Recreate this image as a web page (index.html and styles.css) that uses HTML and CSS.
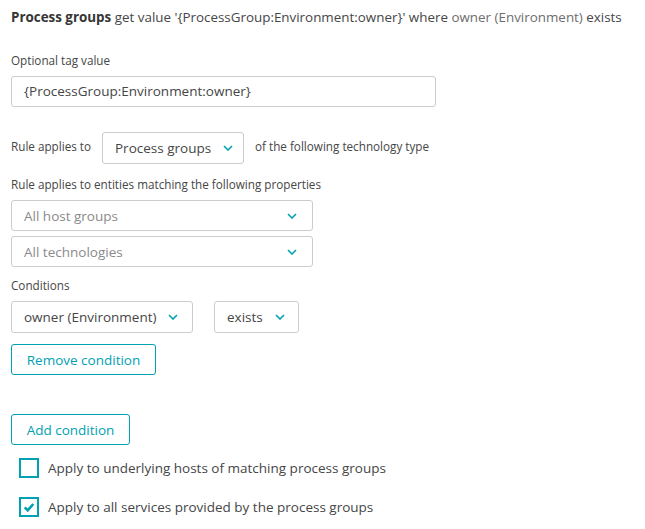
FILE: index.html
```html
<!DOCTYPE html>
<html>
<head>
<meta charset="utf-8">
<link rel="stylesheet" href="styles.css">
</head>
<body>
<div class="page">
  <div class="title"><b>Process groups</b> get value '{ProcessGroup:Environment:owner}' where <span class="muted">owner (Environment)</span> exists</div>

  <div class="label label-tag">Optional tag value</div>
  <div class="input">{ProcessGroup:Environment:owner}</div>

  <div class="applies-row">
    <span class="label">Rule applies to</span>
    <div class="select select-type">Process groups<svg class="chev" viewBox="0 0 10 6"><path d="M1 1 L5 5 L9 1" /></svg></div>
    <span class="label">of the following technology type</span>
  </div>

  <div class="label label-entities">Rule applies to entities matching the following properties</div>
  <div class="select select-wide placeholder">All host groups<svg class="chev" viewBox="0 0 10 6"><path d="M1 1 L5 5 L9 1" /></svg></div>
  <div class="select select-wide placeholder second">All technologies<svg class="chev" viewBox="0 0 10 6"><path d="M1 1 L5 5 L9 1" /></svg></div>

  <div class="label label-cond">Conditions</div>
  <div class="cond-row">
    <div class="select select-owner">owner (Environment)<svg class="chev" viewBox="0 0 10 6"><path d="M1 1 L5 5 L9 1" /></svg></div>
    <div class="select select-exists">exists<svg class="chev" viewBox="0 0 10 6"><path d="M1 1 L5 5 L9 1" /></svg></div>
  </div>
  <button class="btn btn-remove">Remove condition</button>
  <button class="btn btn-add">Add condition</button>

  <label class="check">
    <span class="box"></span>
    <span>Apply to underlying hosts of matching process groups</span>
  </label>
  <label class="check">
    <span class="box"><svg viewBox="0 0 14 14"><path d="M2 7.5 L5.5 11 L12 3.5" /></svg></span>
    <span>Apply to all services provided by the process groups</span>
  </label>
</div>
</body>
</html>
```

FILE: styles.css
```css
html, body {
  margin: 0;
  padding: 0;
  background: #ffffff;
}
body {
  font-family: "Open Sans", "Liberation Sans", sans-serif;
  color: #454646;
}
.page {
  padding: 8px 11px 0 11px;
}
.title {
  font-size: 13.4px;
  line-height: 18px;
  color: #454646;
  white-space: nowrap;
}
.title b {
  font-weight: 700;
  color: #353535;
}
.title .muted {
  color: #6d6d6d;
}
.label {
  font-size: 11.7px;
  line-height: 16px;
  color: #454646;
  white-space: nowrap;
}
.label-tag {
  margin-top: 26px;
}
.input {
  margin-top: 8px;
  width: 425px;
  height: 31px;
  box-sizing: border-box;
  border: 1px solid #cccccc;
  border-radius: 3px;
  padding: 0 12px;
  font-size: 13.5px;
  line-height: 29px;
  color: #454646;
}
.applies-row {
  display: flex;
  align-items: center;
  margin-top: 25px;
}
.applies-row .label:first-child {
  margin-right: 11px;
  position: relative;
  top: -2px;
}
.applies-row .label:last-child {
  margin-left: 11px;
  position: relative;
  top: -2px;
}
.select {
  display: flex;
  align-items: center;
  justify-content: space-between;
  box-sizing: border-box;
  border: 1px solid #cccccc;
  border-radius: 3px;
  height: 32px;
  padding: 0 12px;
  font-size: 13.5px;
  color: #454646;
  white-space: nowrap;
}
.chev {
  width: 10px;
  height: 6px;
  flex: none;
  fill: none;
  stroke: #00a1b2;
  stroke-width: 1.6;
  margin-left: 12px;
}
.select-type {
  width: 142px;
}
.label-entities {
  margin-top: 12px;
}
.select-wide {
  width: 302px;
  margin-top: 8px;
  height: 31px;
}
.select-wide.second {
  margin-top: 5px;
}
.placeholder {
  color: #8a8a8a;
}
.select-wide .chev {
  margin-right: 3px;
}
.label-cond {
  margin-top: 10px;
}
.cond-row {
  display: flex;
  gap: 21px;
  margin-top: 8px;
}
.select-owner {
  width: 182px;
  justify-content: flex-start;
}
.select-exists {
  width: 85px;
  justify-content: flex-start;
}
.btn {
  display: block;
  box-sizing: border-box;
  height: 31px;
  background: #ffffff;
  border: 1px solid #00a1b2;
  border-radius: 3px;
  color: #00a1b2;
  font-family: "Open Sans", "Liberation Sans", sans-serif;
  font-size: 13.5px;
  padding: 0;
  white-space: nowrap;
  text-align: center;
}
.btn-remove {
  margin-top: 11px;
  width: 145px;
}
.btn-add {
  margin-top: 39px;
  width: 119px;
}
.check {
  display: flex;
  align-items: center;
  margin-top: 13px;
  margin-left: 8px;
  font-size: 13.5px;
  color: #454646;
  height: 20px;
}
.check + .check {
  margin-top: 19px;
}
.box {
  width: 20px;
  height: 20px;
  box-sizing: border-box;
  border: 2.5px solid #00a1b2;
  margin-right: 9px;
  display: flex;
  align-items: center;
  justify-content: center;
}
.box svg {
  width: 12px;
  height: 12px;
  fill: none;
  stroke: #00a1b2;
  stroke-width: 3;
}
```
